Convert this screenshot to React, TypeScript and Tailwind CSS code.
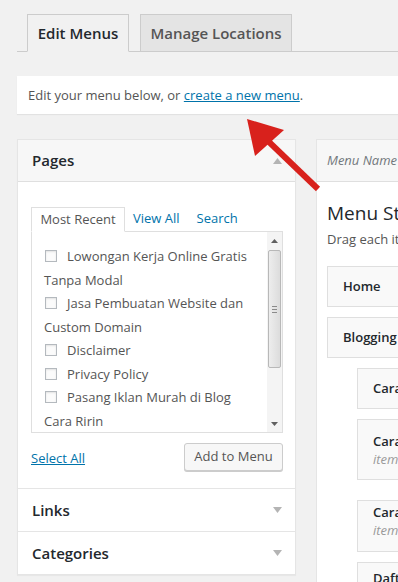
import React from "react";

const font = { fontFamily: '"Open Sans", "Liberation Sans", sans-serif' };

function Checkbox() {
  return (
    <span className="inline-block align-[-1px] w-[12px] h-[12px] border border-[#b4b9be] bg-[#fbfbfb] shadow-[inset_0_1px_2px_rgba(0,0,0,0.1)] ml-[1px] mr-[10px]" />
  );
}

function TriUp() {
  return (
    <svg width="9" height="6" viewBox="0 0 9 6">
      <polygon points="0,6 9,6 4.5,0" fill="#b4b4b4" />
    </svg>
  );
}
function TriDown() {
  return (
    <svg width="9" height="6" viewBox="0 0 9 6">
      <polygon points="0,0 9,0 4.5,6" fill="#b4b4b4" />
    </svg>
  );
}

export default function App() {
  return (
    <div
      className="relative w-[398px] h-[582px] bg-[#f1f1f1] overflow-hidden text-[13px] text-[#555]"
      style={font}
    >
      {/* Tabs */}
      <div className="ml-[17px] pt-[14px] pl-[10px] border-b border-[#ccc] flex items-end gap-[11px]">
        <div className="w-[102px] h-[38px] -mb-px border border-[#ccc] border-b-[#f1f1f1] bg-[#f1f1f1] flex items-center justify-center text-[15px] font-semibold text-[#23282d]">
          Edit Menus
        </div>
        <div className="w-[152px] h-[37px] border border-[#ccc] border-b-0 bg-[#e4e4e4] flex items-center justify-center text-[15px] font-semibold text-[#555]">
          Manage Locations
        </div>
      </div>

      {/* Notice */}
      <div className="mt-[24px] ml-[17px] h-[38px] bg-white shadow-[0_1px_1px_rgba(0,0,0,0.06)] flex items-center pl-[11px] pt-[2px] whitespace-nowrap">
        <span>
          Edit your menu below, or{" "}
          <span className="text-[#0073aa] underline">create a new menu</span>.
        </span>
      </div>

      {/* Columns */}
      <div className="mt-[25px] flex gap-[20px]">
        {/* Left panel */}
        <div className="ml-[17px] w-[279px] shrink-0 h-[436px] bg-white border border-[#e5e5e5] shadow-[0_1px_1px_rgba(0,0,0,0.04)] flex flex-col">
          <div className="h-[42px] shrink-0 bg-[#f7f7f7] border-b border-[#dfdfdf] flex items-center justify-between pl-[14px] pr-[13px]">
            <span className="text-[15px] font-semibold text-[#23282d]">Pages</span>
            <TriUp />
          </div>
          <div className="pl-[13px] pr-[12px] pt-[25px]">
            <div className="flex items-end">
              <div className="w-[94px] h-[25px] -mb-px border border-[#dfdfdf] border-b-white bg-white flex items-center justify-center text-[#555] relative z-10">
                Most Recent
              </div>
              <span className="ml-[8px] mb-[3px] text-[#0073aa]">View All</span>
              <span className="ml-[17px] mb-[3px] text-[#0073aa]">Search</span>
            </div>
            <div className="h-[202px] border border-[#dfdfdf] bg-white flex">
              <div className="flex-1 pl-[12px] pt-[13px] leading-[23.5px] text-[#555] whitespace-nowrap">
                <div><Checkbox />Lowongan Kerja Online Gratis</div>
                <div>Tanpa Modal</div>
                <div><Checkbox />Jasa Pembuatan Website dan</div>
                <div>Custom Domain</div>
                <div><Checkbox />Disclaimer</div>
                <div><Checkbox />Privacy Policy</div>
                <div><Checkbox />Pasang Iklan Murah di Blog</div>
                <div>Cara Ririn</div>
              </div>
              {/* scrollbar */}
              <div className="w-[15px] shrink-0 bg-[#f4f4f4] flex flex-col items-center">
                <div className="h-[18px] flex items-center justify-center">
                  <svg width="7" height="4" viewBox="0 0 7 4">
                    <polygon points="0,4 7,4 3.5,0" fill="#606060" />
                  </svg>
                </div>
                <div className="w-[13px] h-[118px] rounded-[2px] border border-[#b8b8b8] bg-[linear-gradient(to_right,#ededed,#dcdcdc)] flex flex-col items-center justify-center gap-[2px]">
                  <div className="w-[5px] h-px bg-[#8a8a8a]" />
                  <div className="w-[5px] h-px bg-[#8a8a8a]" />
                  <div className="w-[5px] h-px bg-[#8a8a8a]" />
                </div>
                <div className="flex-1" />
                <div className="h-[17px] flex items-center justify-center">
                  <svg width="7" height="4" viewBox="0 0 7 4">
                    <polygon points="0,0 7,0 3.5,4" fill="#606060" />
                  </svg>
                </div>
              </div>
            </div>
            <div className="mt-[10px] flex items-center justify-between">
              <span className="text-[#0073aa] underline mt-[3px]">Select All</span>
              <div className="w-[99px] h-[28px] rounded-[3px] border border-[#ccc] bg-[#f7f7f7] shadow-[0_1px_0_#ccc] flex items-center justify-center text-[#555]">
                Add to Menu
              </div>
            </div>
          </div>
          <div className="mt-[17px] border-t border-[#e5e5e5] h-[43px] flex items-center justify-between pl-[14px] pr-[13px]">
            <span className="text-[15px] font-semibold text-[#23282d]">Links</span>
            <TriDown />
          </div>
          <div className="border-t border-[#e5e5e5] h-[43px] flex items-center justify-between pl-[14px] pr-[13px]">
            <span className="text-[15px] font-semibold text-[#23282d]">Categories</span>
            <TriDown />
          </div>
        </div>

        {/* Right panel */}
        <div className="w-[300px] shrink-0 h-[460px] bg-white border border-[#e5e5e5] flex flex-col">
          <div className="h-[42px] shrink-0 bg-[#f7f7f7] border-b border-[#dfdfdf] flex items-center pl-[10px]">
            <span className="italic text-[#72777c]">Menu Name</span>
          </div>
          <div className="pl-[10px] whitespace-nowrap">
            <div className="mt-[19px] text-[19px] leading-[24px] text-[#23282d]">Menu Structure</div>
            <div className="mt-[4px] leading-[20px]">Drag each item into the order you prefer.</div>
            <div className="mt-[17px] flex flex-col gap-[10px]">
              <div className="h-[41px] border border-[#dfdfdf] bg-[#f9f9f9] flex items-center pl-[15px] font-semibold text-[#23282d]">
                Home
              </div>
              <div className="h-[41px] border border-[#dfdfdf] bg-[#f9f9f9] flex items-center pl-[15px] font-semibold text-[#23282d]">
                Blogging
              </div>
              <div className="ml-[30px] h-[41px] border border-[#dfdfdf] bg-[#f9f9f9] flex items-center pl-[15px] font-semibold text-[#23282d]">
                Cara membuat blog
              </div>
              <div className="ml-[30px] h-[61px] border border-[#dfdfdf] bg-[#f9f9f9] flex flex-col pl-[15px] pt-[12px] leading-[18px]">
                <span className="font-semibold text-[#23282d]">Cara memasang iklan</span>
                <span className="italic text-[#999]">item</span>
              </div>
              <div className="mt-[10px] ml-[30px] h-[52px] border border-[#dfdfdf] bg-[#f9f9f9] flex flex-col pl-[15px] pt-[2px] leading-[18px]">
                <span className="font-semibold text-[#23282d]">Cara mendaftar</span>
                <span className="italic text-[#999]">item</span>
              </div>
              <div className="ml-[30px] h-[41px] border border-[#dfdfdf] bg-[#f9f9f9] flex pl-[15px] pt-[6px] font-semibold text-[#23282d]">
                Daftar
              </div>
            </div>
          </div>
        </div>
      </div>

      {/* Red arrow overlay */}
      <svg className="absolute left-0 top-0 pointer-events-none" width="398" height="582">
        <line x1="318" y1="189" x2="268" y2="141" stroke="#d8211c" strokeWidth="6" />
        <polygon points="247,119 284,130 255,156" fill="#d8211c" />
      </svg>
    </div>
  );
}
